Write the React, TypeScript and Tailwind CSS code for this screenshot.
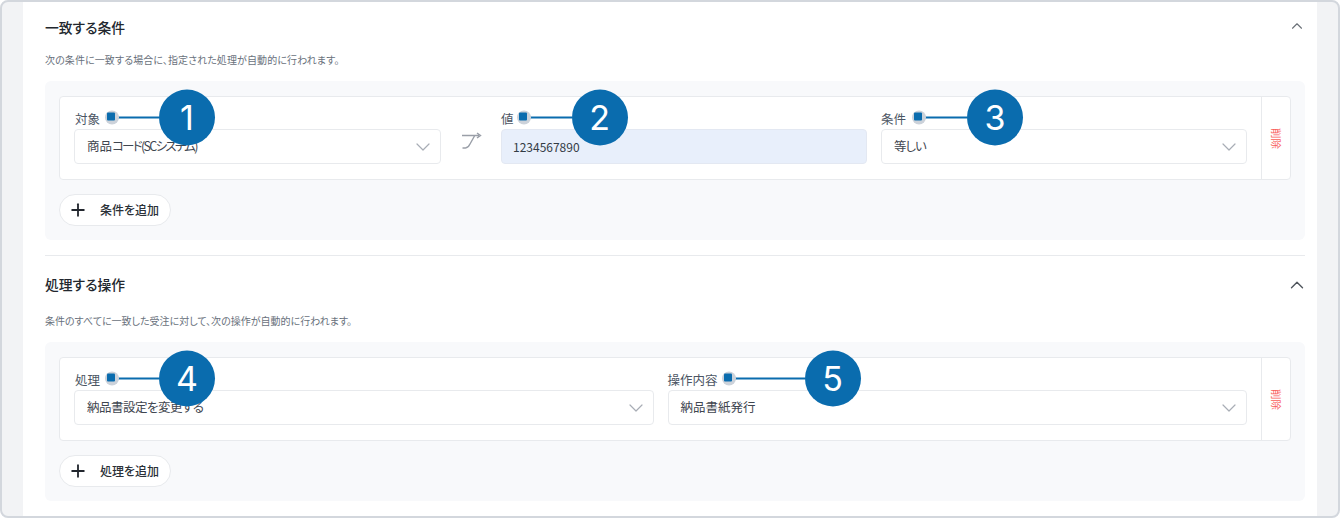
import React from 'react'
import { ChevronDown, ChevronUp, Plus } from 'lucide-react'

const jp = "font-['Noto_Sans_CJK_JP','Noto_Sans',sans-serif] [font-feature-settings:'palt']"

function Callout({ n, line, offset }: { n: number; line: string; offset: string }) {
  return (
    <span className={`absolute left-full top-1/2 flex -translate-y-[calc(50%+1.5px)] items-center ${offset}`}>
      <span className="relative flex h-[14px] w-[14px] items-center justify-center rounded-full bg-[#ccd2da]">
        <span className="absolute left-[2px] top-[2px] h-[8px] w-[8px] rounded-[1px] bg-[#0a6cae]" />
      </span>
      <span className={`-ml-[3px] h-[2px] bg-[#0a6cae] ${line}`} />
      <span className="flex h-[56px] w-[56px] items-center justify-center rounded-full bg-[#0a6cae] font-['Inter',sans-serif] text-[34px] leading-none text-white">
        {n}
      </span>
    </span>
  )
}

function Field({ label, labelClass, n, line, offset, value, className, filled }: { label: string; labelClass?: string; n: number; line: string; offset: string; value: React.ReactNode; className: string; filled?: boolean }) {
  return (
    <div className={className}>
      <div className={`flex h-[18px] items-start ${labelClass ?? ''}`}>
        <span className="relative z-10 text-[12.5px] leading-[16px] text-[#4b5563]">
          {label}
          <Callout n={n} line={line} offset={offset} />
        </span>
      </div>
      {filled ? (
        <div className="flex h-[35px] items-center rounded-[4px] border border-[#e3e8f2] bg-[#e8effb] pl-[11px] text-[12px] text-[#333b45]">
          {value}
        </div>
      ) : (
        <div className="flex h-[35px] items-center justify-between rounded-[4px] border border-[#e8eaed] bg-white pr-[5px] pl-[12px] text-[12.5px] text-[#3f4650]">
          <span>{value}</span>
          <ChevronDown size={24} strokeWidth={1.2} className="text-[#a8adb5]" />
        </div>
      )}
    </div>
  )
}

function DeleteCol() {
  return (
    <div className="flex w-[29px] shrink-0 items-center justify-center border-l border-[#e8eaed]">
      <span className="text-[10.5px] leading-none text-[#f9605a] [text-orientation:sideways] [writing-mode:vertical-rl]">削除</span>
    </div>
  )
}

function AddButton({ label }: { label: string }) {
  return (
    <button className="mt-[14px] flex h-[32px] w-[112px] items-center rounded-full border border-[#e8eaed] bg-white pl-[8px] text-[12px] font-medium text-[#2b3138]">
      <Plus size={20} strokeWidth={2.2} className="text-[#22272e]" />
      <span className="-mt-px ml-[12px]">{label}</span>
    </button>
  )
}

function Section({ title, desc, chevron, chevronSize, descGap, panelGap, add, children }: { title: string; desc: string; chevron: string; chevronSize: number; descGap: string; panelGap: string; add: string; children: React.ReactNode }) {
  return (
    <section>
      <div className="flex h-[20px] items-center justify-between">
        <h2 className="text-[13.8px] font-medium leading-[20px] text-[#22272e]">{title}</h2>
        <ChevronUp size={chevronSize} strokeWidth={1.5} className={chevron} />
      </div>
      <p className={`text-[10px] leading-[16px] text-[#69717c] ${descGap}`}>{desc}</p>
      <div className={`h-[159px] rounded-[6px] bg-[#f8f9fb] px-[14px] pt-[15px] ${panelGap}`}>
        <div className="flex h-[84px] rounded-[4px] border border-[#e8eaed] bg-white">{children}</div>
        <AddButton label={add} />
      </div>
    </section>
  )
}

export default function App() {
  return (
    <div className={`${jp} h-[522px] w-[1340px] bg-white`}>
      <div className="h-[518px] w-[1340px] overflow-hidden rounded-[8px] border-2 border-[#d3d7dd] bg-[#f2f3f5] px-[21px]">
        <div className="h-full bg-white pt-[15px] pr-[12px] pl-[22px]">
          <Section
            title="一致する条件"
            desc="次の条件に一致する場合に、指定された処理が自動的に行われます。"
            chevron="-mt-[2px] -mr-px text-[#6b7178]"
            chevronSize={18}
            descGap="mt-[15px] tracking-[0.1px]"
            panelGap="mt-[13px]"
            add="条件を追加"
          >
            <div className="flex min-w-0 flex-1 items-start px-[14px] pt-[14px]">
              <Field
                label="対象"
                labelClass="pl-px"
                n={1}
                line="w-[43px]"
                offset="ml-[5px]"
                value={<>商品<span className="tracking-[-1.7px]">コード(SCシステム)</span></>}
                className="w-[367px]"
              />
              <div className="flex h-[53px] w-[60px] items-end justify-center pb-[14px]">
                <svg width="22" height="18" viewBox="0 0 22 18" fill="none" className="text-[#9a9fa8]">
                  <path d="M2 3.5 H19 M17 1 L20.5 3.5 L17 6 M2.5 16 H5.5 C8 16 9 14 10 12 L14.5 4" stroke="currentColor" strokeWidth="1.4" />
                </svg>
              </div>
              <Field label="値" n={2} line="w-[44px]" offset="ml-[3px]" value="1234567890" className="w-[366px]" filled />
              <div className="w-[14px]" />
              <Field
                label="条件"
                n={3}
                line="w-[44px]"
                offset="ml-[6px]"
                value={<span className="tracking-[-1px]">等しい</span>}
                className="w-[366px]"
              />
            </div>
            <DeleteCol />
          </Section>
          <div className="mt-[15px] mb-[18px] h-px bg-[#e8eaed]" />
          <Section
            title="処理する操作"
            desc="条件のすべてに一致した受注に対して、次の操作が自動的に行われます。"
            chevron="mt-[2px] -mr-[3px] text-[#4f555c]"
            chevronSize={22}
            descGap="mt-[19px]"
            panelGap="mt-[13px]"
            add="処理を追加"
          >
            <div className="flex min-w-0 flex-1 items-start gap-[14px] px-[14px] pt-[14px]">
              <Field
                label="処理"
                labelClass="pl-px"
                n={4}
                line="w-[43px]"
                offset="ml-[5px]"
                value={<span className="tracking-[-0.5px]">納品書設定を変更する</span>}
                className="flex-1"
              />
              <Field label="操作内容" n={5} line="w-[72px]" offset="ml-[4px]" value="納品書紙発行" className="flex-1" />
            </div>
            <DeleteCol />
          </Section>
        </div>
      </div>
    </div>
  )
}
